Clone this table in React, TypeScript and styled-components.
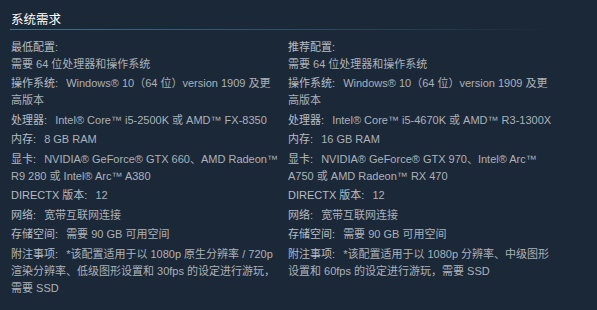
import React from "react";
import styled, { createGlobalStyle } from "styled-components";

const GlobalStyle = createGlobalStyle`
  html, body {
    margin: 0;
    padding: 0;
    background: #1b2838;
  }
  body {
    font-family: "Liberation Sans", Arial, "Noto Sans CJK SC", sans-serif;
  }
`;

const Page = styled.div`
  width: 597px;
  height: 310px;
  background: #1b2838;
  padding: 9px 11px 0 11px;
  box-sizing: border-box;
`;

const Header = styled.h2`
  margin: 0 0 8.5px -1px;
  padding: 0 0 0 1px;
  height: 20px;
  line-height: 19px;
  font-size: 12.5px;
  font-weight: normal;
  color: #ffffff;
  font-family: "Noto Sans CJK SC", sans-serif;
  border-bottom: 1px solid transparent;
  border-image: linear-gradient(to right, #40718d 0%, #2f5169 45%, rgba(47, 81, 105, 0) 95%) 1;
`;

const Columns = styled.div`
  display: grid;
  grid-template-columns: 267px 267px;
  column-gap: 10px;
`;

const Col = styled.div`
  font-size: 11px;
  line-height: 17px;
  color: #acb2b8;
`;

const Title = styled.div`
  color: #b6bdc4;
`;

const List = styled.ul`
  list-style: none;
  margin: 0;
  padding: 0;
`;

const Item = styled.li`
  margin-bottom: 2.5px;
`;

const Label = styled.strong`
  font-weight: normal;
  color: #b6bdc4;
  margin-right: 5px;
`;

type Req = { label?: string; value: string };

const Section = ({ title, items }: { title: string; items: Req[] }) => (
  <Col>
    <Title>{title}</Title>
    <List>
      {items.map((it, i) => (
        <Item key={i}>
          {it.label ? <Label>{it.label}:</Label> : null}
          {it.label ? " " : ""}
          {it.value}
        </Item>
      ))}
    </List>
  </Col>
);

const minReq: Req[] = [
  { value: "需要 64 位处理器和操作系统" },
  { label: "操作系统", value: "Windows® 10（64 位）version 1909 及更高版本" },
  { label: "处理器", value: "Intel® Core™ i5-2500K 或 AMD™ FX-8350" },
  { label: "内存", value: "8 GB RAM" },
  { label: "显卡", value: "NVIDIA® GeForce® GTX 660、AMD Radeon™ R9 280 或 Intel® Arc™ A380" },
  { label: "DIRECTX 版本", value: "12" },
  { label: "网络", value: "宽带互联网连接" },
  { label: "存储空间", value: "需要 90 GB 可用空间" },
  {
    label: "附注事项",
    value: "*该配置适用于以 1080p 原生分辨率 / 720p 渲染分辨率、低级图形设置和 30fps 的设定进行游玩，需要 SSD",
  },
];

const recReq: Req[] = [
  { value: "需要 64 位处理器和操作系统" },
  { label: "操作系统", value: "Windows® 10（64 位）version 1909 及更高版本" },
  { label: "处理器", value: "Intel® Core™ i5-4670K 或 AMD™ R3-1300X" },
  { label: "内存", value: "16 GB RAM" },
  { label: "显卡", value: "NVIDIA® GeForce® GTX 970、Intel® Arc™ A750 或 AMD Radeon™ RX 470" },
  { label: "DIRECTX 版本", value: "12" },
  { label: "网络", value: "宽带互联网连接" },
  { label: "存储空间", value: "需要 90 GB 可用空间" },
  {
    label: "附注事项",
    value: "*该配置适用于以 1080p 分辨率、中级图形设置和 60fps 的设定进行游玩，需要 SSD",
  },
];

export default function App() {
  return (
    <>
      <GlobalStyle />
      <Page>
        <Header>系统需求</Header>
        <Columns>
          <Section title="最低配置:" items={minReq} />
          <Section title="推荐配置:" items={recReq} />
        </Columns>
      </Page>
    </>
  );
}
